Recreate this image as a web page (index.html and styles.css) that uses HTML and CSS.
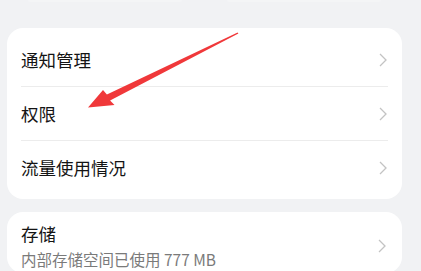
FILE: index.html
```html
<!DOCTYPE html>
<html lang="zh-CN">
<head>
<meta charset="utf-8">
<link rel="stylesheet" href="styles.css">
</head>
<body>
<div class="page">
  <div class="top-buttons">
    <div class="top-btn"></div>
    <div class="top-btn"></div>
  </div>
  <div class="card list">
    <div class="row">
      <span class="label">通知管理</span>
      <svg class="chev" viewBox="0 0 8 14"><path d="M1 1 L7 7 L1 13" /></svg>
    </div>
    <div class="row">
      <span class="label">权限</span>
      <svg class="chev" viewBox="0 0 8 14"><path d="M1 1 L7 7 L1 13" /></svg>
    </div>
    <div class="row">
      <span class="label">流量使用情况</span>
      <svg class="chev" viewBox="0 0 8 14"><path d="M1 1 L7 7 L1 13" /></svg>
    </div>
  </div>
  <div class="card storage">
    <div class="storage-text">
      <div class="label">存储</div>
      <div class="sub">内部存储空间已使用 777 MB</div>
    </div>
    <svg class="chev" viewBox="0 0 8 14"><path d="M1 1 L7 7 L1 13" /></svg>
  </div>
</div>
<svg class="arrow" width="421" height="271" viewBox="0 0 421 271">
  <polygon points="88,107.5 103,90 106.9,94.4 237.6,32.4 238.4,33.6 110.1,100.6 114.5,105" />
</svg>
</body>
</html>
```
FILE: styles.css
```css
html, body {
  margin: 0;
  padding: 0;
  background: #f1f2f4;
}
body {
  width: 421px;
  height: 271px;
  overflow: hidden;
  position: relative;
  font-family: "Noto Sans CJK SC", "Noto Sans", sans-serif;
  color: #141414;
}
.page {
  padding-left: 7px;
  width: 395px;
}
.top-buttons {
  display: flex;
  height: 2px;
  margin-bottom: 26px;
}
.top-btn {
  width: 154px;
  height: 2px;
  background: #f4f5f6;
  border-radius: 0 0 4px 4px;
}
.top-btn:first-child { margin-left: 21px; }
.top-btn:last-child { margin-left: 45px; }
.card {
  background: #ffffff;
  border-radius: 16px;
}
.list {
  padding: 5px 14px 4px;
}
.row {
  height: 54px;
  display: flex;
  align-items: center;
  justify-content: space-between;
  border-bottom: 1px solid #ececec;
  box-sizing: border-box;
}
.row:last-child {
  border-bottom: none;
}
.label {
  font-size: 17.5px;
  line-height: 22px;
  font-weight: 400;
}
.chev {
  width: 8px;
  height: 14px;
  margin-right: 1px;
  fill: none;
  stroke: #c3c3c3;
  stroke-width: 1.3;
}
.storage {
  margin-top: 13px;
  padding: 11px 15px 4px 14px;
  display: flex;
  align-items: center;
  justify-content: space-between;
}
.sub {
  margin-top: 4px;
  font-size: 15.5px;
  line-height: 20px;
  color: #7a7a7a;
}
.arrow {
  position: absolute;
  left: 0;
  top: 0;
  fill: #f0383a;
}
```
